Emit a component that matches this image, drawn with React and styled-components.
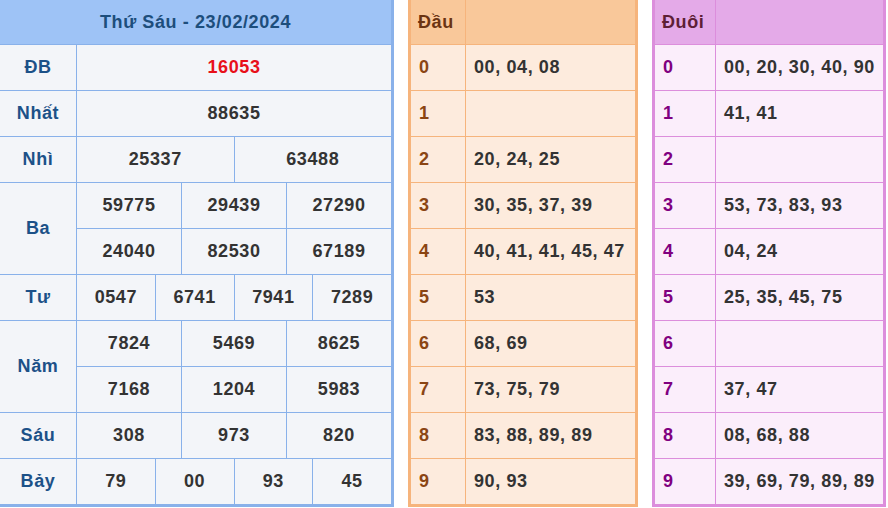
import React from 'react'
import styled, { createGlobalStyle } from 'styled-components'

const GlobalStyle = createGlobalStyle`
  body {
    margin: 0;
    background: #fff;
    font-family: 'Liberation Sans', Arial, sans-serif;
  }
`;

const Page = styled.div`
    display: flex;
    align-items: flex-start;
    gap: 14px;
    margin: -3px 0 0 -3px;
`;
const Table = styled.div`
    display: grid;
    grid-template-columns: ${p => p.cols};
    grid-template-rows: 44px;
    grid-auto-rows: 45px;
    gap: 1px;
    width: ${p => p.width}px;
    box-sizing: border-box;
    border: 3px solid ${p => p.line};
    background: ${p => p.line};
    font-size: 18px;
    font-weight: bold;
    letter-spacing: 0.6px;
`;
const Header = styled.div`
    grid-column: ${p => p.span || 'auto'};
    display: flex;
    align-items: center;
    justify-content: ${p => (p.center ? 'center' : 'flex-start')};
    padding: 0 7px;
    background: ${p => p.bg};
    color: ${p => p.color};
`;
const Cell = styled.div`
    grid-column: span ${p => p.span || 1};
    grid-row: span ${p => p.rows || 1};
    display: flex;
    align-items: center;
    justify-content: ${p => (p.left ? 'flex-start' : 'center')};
    padding: 0 ${p => (p.left ? '8px' : '0')};
    background: ${p => p.bg};
    color: ${p => p.color || '#333'};
    white-space: nowrap;
`;

const BLUE = { line: '#89b1ea', head: '#9ec3f6', cell: '#f3f5f9', label: '#1c5188' };
const ORANGE = { line: '#f6b47c', head: '#f9c89a', cell: '#fdebdd', label: '#8b4513', title: '#6b3412' };
const PURPLE = { line: '#dc8edc', head: '#e4aae8', cell: '#fbeefb', label: '#800080', title: '#5e1f36' };

const prizes = [
  { name: 'ĐB', rows: [['16053']], red: true },
  { name: 'Nhất', rows: [['88635']] },
  { name: 'Nhì', rows: [['25337', '63488']] },
  { name: 'Ba', rows: [['59775', '29439', '27290'], ['24040', '82530', '67189']] },
  { name: 'Tư', rows: [['0547', '6741', '7941', '7289']] },
  { name: 'Năm', rows: [['7824', '5469', '8625'], ['7168', '1204', '5983']] },
  { name: 'Sáu', rows: [['308', '973', '820']] },
  { name: 'Bảy', rows: [['79', '00', '93', '45']] },
];

const dau = ['00, 04, 08', '', '20, 24, 25', '30, 35, 37, 39', '40, 41, 41, 45, 47', '53', '68, 69', '73, 75, 79', '83, 88, 89, 89', '90, 93'];
const duoi = ['00, 20, 30, 40, 90', '41, 41', '', '53, 73, 83, 93', '04, 24', '25, 35, 45, 75', '', '37, 47', '08, 68, 88', '39, 69, 79, 89, 89'];

const Results = () => (
  <Table width={397} cols="76px repeat(12, 1fr)" line={BLUE.line}>
    <Header span="1 / -1" center bg={BLUE.head} color="#1d4e7c">Thứ Sáu - 23/02/2024</Header>
    {prizes.map(p => (
      <React.Fragment key={p.name}>
        <Cell rows={p.rows.length} bg={BLUE.cell} color={BLUE.label}>{p.name}</Cell>
        {p.rows.flat().map((n, i) => (
          <Cell key={i} span={12 / p.rows[0].length} bg={BLUE.cell} color={p.red ? '#e8101a' : undefined}>{n}</Cell>
        ))}
      </React.Fragment>
    ))}
  </Table>
)

const Loto = ({ title, data, theme, width, labelWidth }) => (
  <Table width={width} cols={`${labelWidth}px 1fr`} line={theme.line}>
    <Header bg={theme.head} color={theme.title}>{title}</Header>
    <Header bg={theme.head} />
    {data.map((v, i) => (
      <React.Fragment key={i}>
        <Cell left bg={theme.cell} color={theme.label}>{i}</Cell>
        <Cell left bg={theme.cell}>{v}</Cell>
      </React.Fragment>
    ))}
  </Table>
)

export default function App() {
  return (
    <>
      <GlobalStyle />
      <Page>
        <Results />
        <Loto title="Đầu" data={dau} theme={ORANGE} width={230} labelWidth={54} />
        <Loto title="Đuôi" data={duoi} theme={PURPLE} width={234} labelWidth={60} />
      </Page>
    </>
  )
}
